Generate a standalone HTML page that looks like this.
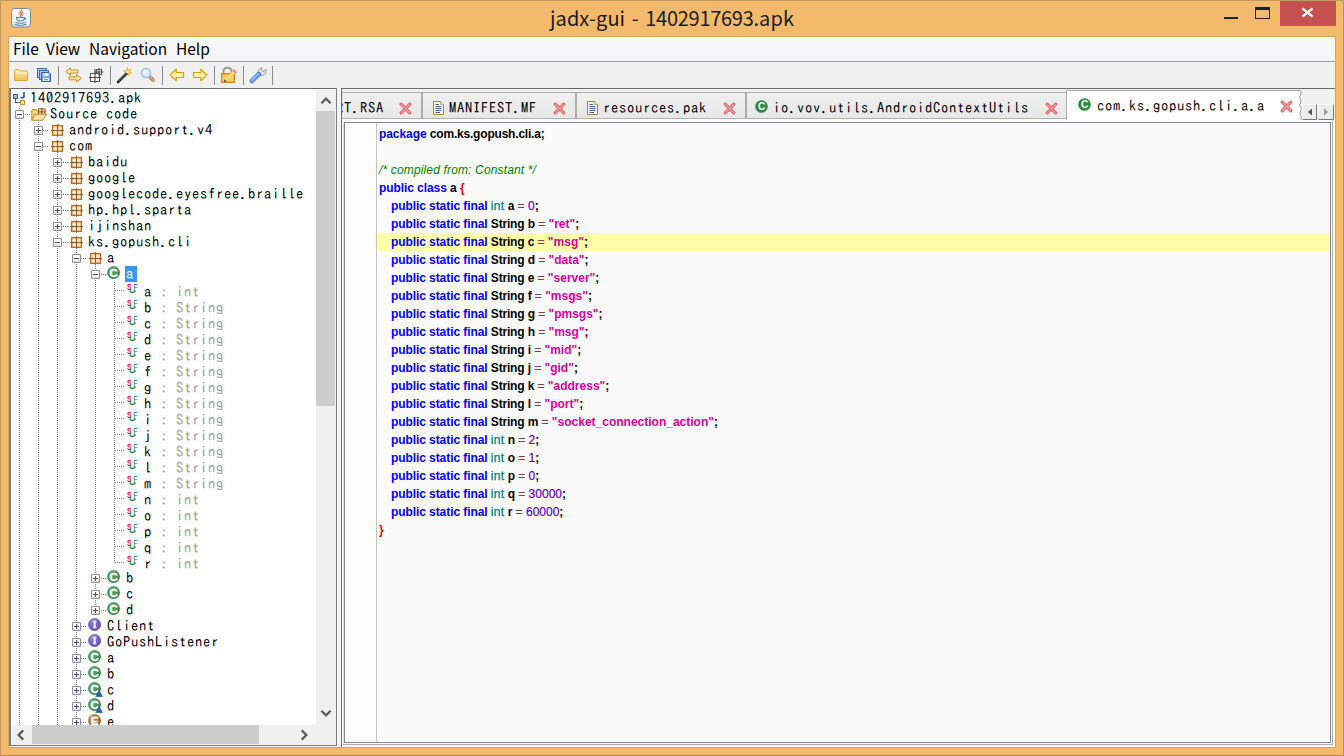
<!DOCTYPE html>
<html lang="en"><head><meta charset="utf-8"><title>jadx-gui - 1402917693.apk</title>
<style>
*{box-sizing:border-box}
html,body{margin:0;padding:0}
body{width:1344px;height:756px;overflow:hidden;background:#f3ba6b;position:relative;font-family:"Noto Sans CJK SC","Liberation Sans",sans-serif}
.ab{position:absolute;display:block}
#frame{position:absolute;left:0;top:0;width:1344px;height:756px;border:1px solid #c39a5e;border-right-color:#b8905a;border-bottom-color:#b08a55}
#title{position:absolute;left:0;top:3px;width:1344px;text-align:center;font-size:20px;line-height:30px;color:#1c1c1c;letter-spacing:0.06px}
#content{position:absolute;left:9px;top:37px;width:1326px;height:710px;background:#f0f0f0}
#div{position:absolute;left:337px;top:88px;width:4px;height:659px;background:#f5f5f5}
#menu{position:absolute;left:9px;top:37px;width:1326px;height:24px;background:#f5f6f7;font-size:15.5px;line-height:23px;color:#000;white-space:pre}
#menu span{position:absolute;top:0}
#lp{position:absolute;left:9px;top:88px;width:328px;height:658px;background:#fff;border:1px solid #7a7f8c;border-top-color:#6a6a6a;border-left:2px solid #7a7f8c}
#tree{position:absolute;left:11px;top:90px;width:305px;height:635px;overflow:hidden;background:#fff}
.tl{position:absolute;height:16px;font:14.5px/16px "IPAGothic","Liberation Mono",monospace;letter-spacing:0.75px;color:#000;white-space:pre}
.tl i{font-style:normal;color:#999}
.fl{overflow:hidden;height:16px}
.fl span{position:relative;top:2px;display:block}
.sel{background:#3399ff;color:#fff;width:12px;padding-left:1px}
.tt{position:absolute;font:14.5px/16px "IPAGothic","Liberation Mono",monospace;letter-spacing:0.75px;color:#000;white-space:pre}
.bx{position:absolute;width:9px;height:9px;border:1px solid #919191;border-radius:1px;background:linear-gradient(#fff 50%,#dcdcdc)}
.bx:before{content:"";position:absolute;left:1px;top:3px;width:5px;height:1px;background:#3a4f8f}
.bx.p:after{content:"";position:absolute;left:3px;top:1px;width:1px;height:5px;background:#3a4f8f}
.hd{position:absolute;height:1px;background:repeating-linear-gradient(90deg,#808080 0 1px,transparent 1px 2px)}
.vd{position:absolute;width:1px;background:repeating-linear-gradient(180deg,#808080 0 1px,transparent 1px 2px)}
.sb{position:absolute;background:#f0f0f0}
.th{position:absolute;background:#cdcdcd}
.tab{position:absolute;background:linear-gradient(#efefef,#e7e7e7);border:1px solid #adadad;border-bottom-color:#b0b0b0}
.tabsel{position:absolute;background:#fff;border:1px solid #adadad;border-bottom:none;border-right:none}
#rp{position:absolute;left:341px;top:88px;width:994px;height:659px;border-left:1px solid #6a6a6a;border-top:1px solid #6a6a6a;background:#f0f0f0}
#tc{position:absolute;left:342px;top:119px;width:993px;height:628px;background:#fff}
#ed{position:absolute;left:344px;top:122px;width:987px;height:621px;border:1px solid #83858f;background:#fafafa;overflow:hidden}
#gut{position:absolute;left:0;top:0;width:32px;height:100%;background:#fdfdfd;border-right:1px solid #c4c4c4}
#code{position:absolute;left:32px;top:2px;right:0;font:12px/18px "Liberation Sans",sans-serif;color:#000}
.ln{height:18px;padding-left:2px;white-space:pre}
.hl{background:#ffffaa}
.ind{display:inline-block;width:12px}
#code b{font-weight:bold}
.k{color:#0000ff;letter-spacing:-0.08px}
.i{color:#000;letter-spacing:-0.2px}
.t{color:#008080;letter-spacing:0.3px;-webkit-text-stroke:0.25px #008080}
.o{color:#804040;-webkit-text-stroke:0.2px #804040}
.n{color:#6400c8;-webkit-text-stroke:0.2px #6400c8}
.s{color:#dc009c}
.r{color:#ff0000}
.c{color:#008000;font-style:italic;letter-spacing:0.15px}
</style></head>
<body>
<div id="frame"></div>
<!-- title bar -->
<svg class="ab" style="left:10px;top:7px" width="22" height="22" viewBox="0 0 22 22">
<linearGradient id="jb" x1="0" y1="0" x2="0" y2="1"><stop offset="0" stop-color="#ffffff"/><stop offset="1" stop-color="#dfe6ee"/></linearGradient>
<rect x="1.5" y="1.5" width="19" height="18.5" rx="3" fill="url(#jb)" stroke="#6f8db0" stroke-width="1"/>
<path d="M11.8 3.2 Q8.5 6 10.6 8 Q11.6 9 10.2 10.4 M12.8 5 Q11 6.6 12.4 8" fill="none" stroke="#e0782a" stroke-width="1.3" stroke-linecap="round"/>
<path d="M6.5 10.5 H14.5 Q14.5 14 10.5 14 Q6.5 14 6.5 10.5 Z" fill="none" stroke="#5a82aa" stroke-width="1.1"/>
<path d="M14.5 11 Q17 11 15 13" fill="none" stroke="#5a82aa" stroke-width="1"/>
<path d="M5.5 15.5 Q10.5 17.5 15.5 15.5 M4.5 17.4 Q10.5 19.6 16.5 17.4" fill="none" stroke="#5a82aa" stroke-width="1"/>
</svg>
<div id="title">jadx-gui<span style="word-spacing:2px"> - </span><span style="letter-spacing:-0.28px">1402917693</span>.apk</div>
<div class="ab" style="left:1224px;top:17px;width:14px;height:2px;background:#1e2228"></div>
<div class="ab" style="left:1255px;top:7px;width:15px;height:12px;border:1px solid #1e2228;border-top-width:3px"></div>
<div class="ab" style="left:1280px;top:1px;width:56px;height:25px;background:#c75050"></div>
<svg class="ab" style="left:1301px;top:7px" width="13" height="11" viewBox="0 0 13 11"><path d="M1.4 1.4 L11.6 9.6 M11.6 1.4 L1.4 9.6" stroke="#fff" stroke-width="2.4"/></svg>

<div class="ab" style="left:8px;top:36px;width:1328px;height:712px;background:#d8a55e"></div>
<div id="content"></div>
<div id="menu"><span style="left:4px">File</span><span style="left:37px">View</span><span style="left:80px">Navigation</span><span style="left:167px">Help</span></div>
<div class="ab" style="left:9px;top:61px;width:1326px;height:1px;background:#9c9c9c"></div>
<svg class="ab" style="left:13px;top:68px" width="16" height="14" viewBox="0 0 16 14"><linearGradient id="fo" x1="0" y1="0" x2="0" y2="1"><stop offset="0" stop-color="#fdf0b8"/><stop offset="1" stop-color="#f2c24f"/></linearGradient><path d="M1.5 12.5 V2.5 Q1.5 1.5 2.5 1.5 H6 L7.2 3 H13.5 Q14.5 3 14.5 4 V12.5 Z" fill="url(#fo)" stroke="#e0a63a" stroke-width="1"/><path d="M2 5 H14" stroke="#fff7d8" stroke-width="1"/></svg>
<svg class="ab" style="left:36px;top:67px" width="16" height="16" viewBox="0 0 16 16"><rect x="1.5" y="1.5" width="9" height="9" fill="#a8c4ea" stroke="#3f6fb5"/><rect x="3.5" y="3.5" width="9" height="9" fill="#a8c4ea" stroke="#3f6fb5"/><path d="M5.5 5.5 H13 L14.5 7 V14.5 H5.5 Z" fill="#7fa6de" stroke="#2f5fae"/><rect x="7.5" y="6" width="5" height="3" fill="#e6eefb"/><rect x="7" y="11" width="6" height="3" fill="#f4f7f4"/><rect x="8" y="12" width="4" height="1.3" fill="#58b848"/></svg>
<svg class="ab" style="left:65px;top:67px" width="17" height="16" viewBox="0 0 17 16"><path d="M0.8 4.5 L5.5 0.8 V3 H13 V6 H5.5 V8.2 Z" fill="#fbe7a0" stroke="#cf8f1c" stroke-width="1" stroke-linejoin="round"/><path d="M16.2 11.3 L11.5 7.6 V9.8 H4 V12.8 H11.5 V15 Z" fill="#fbe7a0" stroke="#cf8f1c" stroke-width="1" stroke-linejoin="round"/></svg>
<svg class="ab" style="left:88px;top:67px" width="17" height="17" viewBox="0 0 17 17"><rect x="8.5" y="2.5" width="5" height="5" fill="#f6f6f6" stroke="#555" stroke-width="1"/><rect x="2.5" y="6.5" width="9" height="8" fill="#fafafa" stroke="#555" stroke-width="1"/><path d="M7 2 V16 M1 10.5 H13 M11 1 V9 M6 5 H15.5" stroke="#4a4a4a" stroke-width="1.1" fill="none"/></svg>
<svg class="ab" style="left:116px;top:66px" width="17" height="18" viewBox="0 0 17 18"><path d="M11.5 1 L12.3 4 L15.5 3 L13.4 5.4 L16 7 L13 7.3 L13 10 L11.4 7.8 L9 9 L10 6.4 L7.5 5 L10.5 4.5 Z" fill="#f7c63c" stroke="#e9a21a" stroke-width="0.5"/><path d="M2 16 L11 7" stroke="#222" stroke-width="2.6" stroke-linecap="round"/><path d="M2.2 15.3 L10.5 7" stroke="#9a9a9a" stroke-width="0.8"/><circle cx="11.6" cy="6.2" r="1.4" fill="#fff8d0"/></svg>
<svg class="ab" style="left:140px;top:67px" width="16" height="16" viewBox="0 0 16 16"><path d="M9.2 9.2 L13 13" stroke="#a86a38" stroke-width="3.4" stroke-linecap="round"/><path d="M9.2 9.2 L13 13" stroke="#dba878" stroke-width="1.8" stroke-linecap="round"/><circle cx="6" cy="6" r="4.6" fill="#dcebfc" stroke="#9bbfee" stroke-width="1.5"/><circle cx="5" cy="5" r="2" fill="#f4f9ff"/></svg>
<svg class="ab" style="left:169px;top:68px" width="16" height="14" viewBox="0 0 16 14"><path d="M1.2 7 L7.2 1.2 V4.5 H14.5 V9.5 H7.2 V12.8 Z" fill="#fdf0b0" stroke="#d9a01a" stroke-width="1.2" stroke-linejoin="round"/></svg>
<svg class="ab" style="left:192px;top:68px" width="16" height="14" viewBox="0 0 16 14"><path d="M14.8 7 L8.8 1.2 V4.5 H1.5 V9.5 H8.8 V12.8 Z" fill="#fdf0b0" stroke="#d9a01a" stroke-width="1.2" stroke-linejoin="round"/></svg>
<svg class="ab" style="left:220px;top:66px" width="18" height="18" viewBox="0 0 18 18"><path d="M3.5 8 V5.5 Q3.5 1.8 7.5 1.8 Q11.5 1.8 11.5 5.5 V8" fill="none" stroke="#9a9a9a" stroke-width="2"/><rect x="1.5" y="7.5" width="13" height="9" fill="#f3b33d" stroke="#d98a14" stroke-width="1"/><rect x="3" y="9" width="10" height="6" fill="#f8cf6e"/><path d="M5.5 14.5 L14.5 5.5" stroke="#f2c44a" stroke-width="3.2" stroke-linecap="round"/><path d="M5.5 14.5 L14.5 5.5" stroke="#fbe9a8" stroke-width="1.2"/><path d="M13.6 4.4 L15.6 6.4" stroke="#e59a8a" stroke-width="2.4" stroke-linecap="round"/><path d="M4 16 L4.6 13.4 L6.6 15.4 Z" fill="#3a2a18"/></svg>
<svg class="ab" style="left:248px;top:66px" width="19" height="18" viewBox="0 0 19 18"><path d="M10.2 8.2 Q9 3.6 13.6 1.6 L13.9 4.9 L16 5.4 L17.8 3.2 Q18.8 8 14.6 9.4 Q12.8 10 11.6 9.4 Z" fill="#e4e4e4" stroke="#8f8f8f" stroke-width="0.9"/><path d="M4 14.8 L10.8 8.2" stroke="#3f72c8" stroke-width="4.6" stroke-linecap="round"/><path d="M4 14.8 L10.8 8.2" stroke="#6fa0ea" stroke-width="3" stroke-linecap="round"/><path d="M3.8 14 L9.8 8.2" stroke="#a8c8f6" stroke-width="1.1" stroke-linecap="round"/></svg>
<div class="ab" style="left:58px;top:66px;width:1px;height:19px;background:#8c8c8c"></div>
<div class="ab" style="left:110px;top:66px;width:1px;height:19px;background:#8c8c8c"></div>
<div class="ab" style="left:162px;top:66px;width:1px;height:19px;background:#8c8c8c"></div>
<div class="ab" style="left:214px;top:66px;width:1px;height:19px;background:#8c8c8c"></div>
<div class="ab" style="left:243px;top:66px;width:1px;height:19px;background:#8c8c8c"></div>
<div class="ab" style="left:272px;top:66px;width:1px;height:19px;background:#8c8c8c"></div>

<div id="div"></div>
<!-- left pane -->
<div id="lp"></div>
<div id="tree">
<svg class="ab" style="left:2px;top:1px" width="13" height="15" viewBox="0 0 13 15"><path d="M2.5 7 V11.5 H8" fill="none" stroke="#2d62a0" stroke-width="1.1"/><rect x="0.5" y="3.5" width="4" height="4" fill="#a9bbdc" stroke="#2d62a0" stroke-width="1"/><rect x="7.5" y="9.5" width="4" height="4" fill="#ffe28a" stroke="#c9952a" stroke-width="1"/><path d="M11 1 V5.2 Q11 6.8 9.3 6.8 Q8.4 6.8 7.8 6.2" fill="none" stroke="#2a5fa8" stroke-width="1.7"/></svg>
<div class="tl" style="left:19px;top:0px">1402917693.apk</div>
<div class="bx" style="left:4px;top:20px"></div>
<div class="hd" style="left:14px;top:24px;width:5px"></div>
<svg class="ab" style="left:20px;top:18px" width="17" height="14" viewBox="0 0 17 14"><path d="M0.8 12.3 V2.6 Q0.8 1.6 1.8 1.6 H5.2 L6.4 3 H11.5 V5" fill="#f5d488" stroke="#c08426" stroke-width="1"/><rect x="7.5" y="0.8" width="6.6" height="6.2" fill="#f6dcae" stroke="#a4551a" stroke-width="0.9"/><path d="M10.8 0 V7.4 M7 3.9 H15" stroke="#8a4717" stroke-width="1"/><path d="M0.8 12.3 L4.2 6.2 H15.8 L11.6 12.3 Z" fill="#fbe3a4" stroke="#c08426" stroke-width="1" stroke-linejoin="round"/></svg>
<div class="tl" style="left:39px;top:16px">Source code</div>
<div class="bx p" style="left:23px;top:36px"></div>
<div class="hd" style="left:32px;top:40px;width:6px"></div>
<svg class="ab" style="left:40px;top:34px" width="14" height="14" viewBox="0 0 14 14"><rect x="1.6" y="1.6" width="9.8" height="9.8" fill="#eec08a" stroke="#c2701f" stroke-width="1.3"/><circle cx="4.3" cy="4.3" r="1.7" fill="#fdf0d4"/><circle cx="8.8" cy="4.3" r="1.7" fill="#fbe8c6"/><circle cx="4.3" cy="8.8" r="1.7" fill="#fbe8c6"/><circle cx="8.8" cy="8.8" r="1.7" fill="#f9e2ba"/><path d="M6.5 0 V13 M0 6.5 H13" stroke="#94603c" stroke-width="1"/></svg>
<div class="tl" style="left:58px;top:32px">android.support.v4</div>
<div class="bx" style="left:23px;top:52px"></div>
<div class="hd" style="left:32px;top:56px;width:6px"></div>
<svg class="ab" style="left:40px;top:50px" width="14" height="14" viewBox="0 0 14 14"><rect x="1.6" y="1.6" width="9.8" height="9.8" fill="#eec08a" stroke="#c2701f" stroke-width="1.3"/><circle cx="4.3" cy="4.3" r="1.7" fill="#fdf0d4"/><circle cx="8.8" cy="4.3" r="1.7" fill="#fbe8c6"/><circle cx="4.3" cy="8.8" r="1.7" fill="#fbe8c6"/><circle cx="8.8" cy="8.8" r="1.7" fill="#f9e2ba"/><path d="M6.5 0 V13 M0 6.5 H13" stroke="#94603c" stroke-width="1"/></svg>
<div class="tl" style="left:58px;top:48px">com</div>
<div class="bx p" style="left:42px;top:68px"></div>
<div class="hd" style="left:52px;top:72px;width:5px"></div>
<svg class="ab" style="left:59px;top:66px" width="14" height="14" viewBox="0 0 14 14"><rect x="1.6" y="1.6" width="9.8" height="9.8" fill="#eec08a" stroke="#c2701f" stroke-width="1.3"/><circle cx="4.3" cy="4.3" r="1.7" fill="#fdf0d4"/><circle cx="8.8" cy="4.3" r="1.7" fill="#fbe8c6"/><circle cx="4.3" cy="8.8" r="1.7" fill="#fbe8c6"/><circle cx="8.8" cy="8.8" r="1.7" fill="#f9e2ba"/><path d="M6.5 0 V13 M0 6.5 H13" stroke="#94603c" stroke-width="1"/></svg>
<div class="tl" style="left:77px;top:64px">baidu</div>
<div class="bx p" style="left:42px;top:84px"></div>
<div class="hd" style="left:52px;top:88px;width:5px"></div>
<svg class="ab" style="left:59px;top:82px" width="14" height="14" viewBox="0 0 14 14"><rect x="1.6" y="1.6" width="9.8" height="9.8" fill="#eec08a" stroke="#c2701f" stroke-width="1.3"/><circle cx="4.3" cy="4.3" r="1.7" fill="#fdf0d4"/><circle cx="8.8" cy="4.3" r="1.7" fill="#fbe8c6"/><circle cx="4.3" cy="8.8" r="1.7" fill="#fbe8c6"/><circle cx="8.8" cy="8.8" r="1.7" fill="#f9e2ba"/><path d="M6.5 0 V13 M0 6.5 H13" stroke="#94603c" stroke-width="1"/></svg>
<div class="tl" style="left:77px;top:80px">google</div>
<div class="bx p" style="left:42px;top:100px"></div>
<div class="hd" style="left:52px;top:104px;width:5px"></div>
<svg class="ab" style="left:59px;top:98px" width="14" height="14" viewBox="0 0 14 14"><rect x="1.6" y="1.6" width="9.8" height="9.8" fill="#eec08a" stroke="#c2701f" stroke-width="1.3"/><circle cx="4.3" cy="4.3" r="1.7" fill="#fdf0d4"/><circle cx="8.8" cy="4.3" r="1.7" fill="#fbe8c6"/><circle cx="4.3" cy="8.8" r="1.7" fill="#fbe8c6"/><circle cx="8.8" cy="8.8" r="1.7" fill="#f9e2ba"/><path d="M6.5 0 V13 M0 6.5 H13" stroke="#94603c" stroke-width="1"/></svg>
<div class="tl" style="left:77px;top:96px">googlecode.eyesfree.braille</div>
<div class="bx p" style="left:42px;top:116px"></div>
<div class="hd" style="left:52px;top:120px;width:5px"></div>
<svg class="ab" style="left:59px;top:114px" width="14" height="14" viewBox="0 0 14 14"><rect x="1.6" y="1.6" width="9.8" height="9.8" fill="#eec08a" stroke="#c2701f" stroke-width="1.3"/><circle cx="4.3" cy="4.3" r="1.7" fill="#fdf0d4"/><circle cx="8.8" cy="4.3" r="1.7" fill="#fbe8c6"/><circle cx="4.3" cy="8.8" r="1.7" fill="#fbe8c6"/><circle cx="8.8" cy="8.8" r="1.7" fill="#f9e2ba"/><path d="M6.5 0 V13 M0 6.5 H13" stroke="#94603c" stroke-width="1"/></svg>
<div class="tl" style="left:77px;top:112px">hp.hpl.sparta</div>
<div class="bx p" style="left:42px;top:132px"></div>
<div class="hd" style="left:52px;top:136px;width:5px"></div>
<svg class="ab" style="left:59px;top:130px" width="14" height="14" viewBox="0 0 14 14"><rect x="1.6" y="1.6" width="9.8" height="9.8" fill="#eec08a" stroke="#c2701f" stroke-width="1.3"/><circle cx="4.3" cy="4.3" r="1.7" fill="#fdf0d4"/><circle cx="8.8" cy="4.3" r="1.7" fill="#fbe8c6"/><circle cx="4.3" cy="8.8" r="1.7" fill="#fbe8c6"/><circle cx="8.8" cy="8.8" r="1.7" fill="#f9e2ba"/><path d="M6.5 0 V13 M0 6.5 H13" stroke="#94603c" stroke-width="1"/></svg>
<div class="tl" style="left:77px;top:128px">ijinshan</div>
<div class="bx" style="left:42px;top:148px"></div>
<div class="hd" style="left:52px;top:152px;width:5px"></div>
<svg class="ab" style="left:59px;top:146px" width="14" height="14" viewBox="0 0 14 14"><rect x="1.6" y="1.6" width="9.8" height="9.8" fill="#eec08a" stroke="#c2701f" stroke-width="1.3"/><circle cx="4.3" cy="4.3" r="1.7" fill="#fdf0d4"/><circle cx="8.8" cy="4.3" r="1.7" fill="#fbe8c6"/><circle cx="4.3" cy="8.8" r="1.7" fill="#fbe8c6"/><circle cx="8.8" cy="8.8" r="1.7" fill="#f9e2ba"/><path d="M6.5 0 V13 M0 6.5 H13" stroke="#94603c" stroke-width="1"/></svg>
<div class="tl" style="left:77px;top:144px">ks.gopush.cli</div>
<div class="bx" style="left:61px;top:164px"></div>
<div class="hd" style="left:70px;top:168px;width:6px"></div>
<svg class="ab" style="left:78px;top:162px" width="14" height="14" viewBox="0 0 14 14"><rect x="1.6" y="1.6" width="9.8" height="9.8" fill="#eec08a" stroke="#c2701f" stroke-width="1.3"/><circle cx="4.3" cy="4.3" r="1.7" fill="#fdf0d4"/><circle cx="8.8" cy="4.3" r="1.7" fill="#fbe8c6"/><circle cx="4.3" cy="8.8" r="1.7" fill="#fbe8c6"/><circle cx="8.8" cy="8.8" r="1.7" fill="#f9e2ba"/><path d="M6.5 0 V13 M0 6.5 H13" stroke="#94603c" stroke-width="1"/></svg>
<div class="tl" style="left:96px;top:160px">a</div>
<div class="bx" style="left:80px;top:180px"></div>
<div class="hd" style="left:90px;top:184px;width:5px"></div>
<svg class="ab" style="left:96px;top:176px" width="16" height="16" viewBox="0 0 16 16"><radialGradient id="gC96_176" cx="0.35" cy="0.3" r="0.8"><stop offset="0" stop-color="#6bb07a"/><stop offset="1" stop-color="#2f7f42"/></radialGradient><circle cx="6.5" cy="6.5" r="6.5" fill="url(#gC96_176)"/><text x="6.6" y="10.6" text-anchor="middle" font-family='"Liberation Sans",sans-serif' font-weight="bold" font-size="11.5" fill="#fff" stroke="#fff" stroke-width="0.3">C</text></svg>
<div class="tl sel" style="left:114px;top:176px">a</div>
<div class="hd" style="left:104px;top:200px;width:10px"></div>
<svg class="ab" style="left:116px;top:192px" width="13" height="13" viewBox="0 0 13 13"><path d="M2.6 8.3 Q5.5 12.9 8.4 8.3" fill="none" stroke="#2f8a3e" stroke-width="1.5"/><g transform="translate(0,7.7) scale(1,0.9)"><text x="0" y="0" textLength="4.6" lengthAdjust="spacingAndGlyphs" font-family='"Liberation Sans",sans-serif' font-weight="bold" font-size="10" fill="#c4102f">S</text><text x="6.2" y="0" textLength="4.4" lengthAdjust="spacingAndGlyphs" font-family='"Liberation Sans",sans-serif' font-size="10" fill="#3f5a8c">F</text></g></svg>
<div class="tl fl" style="left:133px;top:192px"><span>a<i> : int</i></span></div>
<div class="hd" style="left:104px;top:216px;width:10px"></div>
<svg class="ab" style="left:116px;top:208px" width="13" height="13" viewBox="0 0 13 13"><path d="M2.6 8.3 Q5.5 12.9 8.4 8.3" fill="none" stroke="#2f8a3e" stroke-width="1.5"/><g transform="translate(0,7.7) scale(1,0.9)"><text x="0" y="0" textLength="4.6" lengthAdjust="spacingAndGlyphs" font-family='"Liberation Sans",sans-serif' font-weight="bold" font-size="10" fill="#c4102f">S</text><text x="6.2" y="0" textLength="4.4" lengthAdjust="spacingAndGlyphs" font-family='"Liberation Sans",sans-serif' font-size="10" fill="#3f5a8c">F</text></g></svg>
<div class="tl fl" style="left:133px;top:208px"><span>b<i> : String</i></span></div>
<div class="hd" style="left:104px;top:232px;width:10px"></div>
<svg class="ab" style="left:116px;top:224px" width="13" height="13" viewBox="0 0 13 13"><path d="M2.6 8.3 Q5.5 12.9 8.4 8.3" fill="none" stroke="#2f8a3e" stroke-width="1.5"/><g transform="translate(0,7.7) scale(1,0.9)"><text x="0" y="0" textLength="4.6" lengthAdjust="spacingAndGlyphs" font-family='"Liberation Sans",sans-serif' font-weight="bold" font-size="10" fill="#c4102f">S</text><text x="6.2" y="0" textLength="4.4" lengthAdjust="spacingAndGlyphs" font-family='"Liberation Sans",sans-serif' font-size="10" fill="#3f5a8c">F</text></g></svg>
<div class="tl fl" style="left:133px;top:224px"><span>c<i> : String</i></span></div>
<div class="hd" style="left:104px;top:248px;width:10px"></div>
<svg class="ab" style="left:116px;top:240px" width="13" height="13" viewBox="0 0 13 13"><path d="M2.6 8.3 Q5.5 12.9 8.4 8.3" fill="none" stroke="#2f8a3e" stroke-width="1.5"/><g transform="translate(0,7.7) scale(1,0.9)"><text x="0" y="0" textLength="4.6" lengthAdjust="spacingAndGlyphs" font-family='"Liberation Sans",sans-serif' font-weight="bold" font-size="10" fill="#c4102f">S</text><text x="6.2" y="0" textLength="4.4" lengthAdjust="spacingAndGlyphs" font-family='"Liberation Sans",sans-serif' font-size="10" fill="#3f5a8c">F</text></g></svg>
<div class="tl fl" style="left:133px;top:240px"><span>d<i> : String</i></span></div>
<div class="hd" style="left:104px;top:264px;width:10px"></div>
<svg class="ab" style="left:116px;top:256px" width="13" height="13" viewBox="0 0 13 13"><path d="M2.6 8.3 Q5.5 12.9 8.4 8.3" fill="none" stroke="#2f8a3e" stroke-width="1.5"/><g transform="translate(0,7.7) scale(1,0.9)"><text x="0" y="0" textLength="4.6" lengthAdjust="spacingAndGlyphs" font-family='"Liberation Sans",sans-serif' font-weight="bold" font-size="10" fill="#c4102f">S</text><text x="6.2" y="0" textLength="4.4" lengthAdjust="spacingAndGlyphs" font-family='"Liberation Sans",sans-serif' font-size="10" fill="#3f5a8c">F</text></g></svg>
<div class="tl fl" style="left:133px;top:256px"><span>e<i> : String</i></span></div>
<div class="hd" style="left:104px;top:280px;width:10px"></div>
<svg class="ab" style="left:116px;top:272px" width="13" height="13" viewBox="0 0 13 13"><path d="M2.6 8.3 Q5.5 12.9 8.4 8.3" fill="none" stroke="#2f8a3e" stroke-width="1.5"/><g transform="translate(0,7.7) scale(1,0.9)"><text x="0" y="0" textLength="4.6" lengthAdjust="spacingAndGlyphs" font-family='"Liberation Sans",sans-serif' font-weight="bold" font-size="10" fill="#c4102f">S</text><text x="6.2" y="0" textLength="4.4" lengthAdjust="spacingAndGlyphs" font-family='"Liberation Sans",sans-serif' font-size="10" fill="#3f5a8c">F</text></g></svg>
<div class="tl fl" style="left:133px;top:272px"><span>f<i> : String</i></span></div>
<div class="hd" style="left:104px;top:296px;width:10px"></div>
<svg class="ab" style="left:116px;top:288px" width="13" height="13" viewBox="0 0 13 13"><path d="M2.6 8.3 Q5.5 12.9 8.4 8.3" fill="none" stroke="#2f8a3e" stroke-width="1.5"/><g transform="translate(0,7.7) scale(1,0.9)"><text x="0" y="0" textLength="4.6" lengthAdjust="spacingAndGlyphs" font-family='"Liberation Sans",sans-serif' font-weight="bold" font-size="10" fill="#c4102f">S</text><text x="6.2" y="0" textLength="4.4" lengthAdjust="spacingAndGlyphs" font-family='"Liberation Sans",sans-serif' font-size="10" fill="#3f5a8c">F</text></g></svg>
<div class="tl fl" style="left:133px;top:288px"><span>g<i> : String</i></span></div>
<div class="hd" style="left:104px;top:312px;width:10px"></div>
<svg class="ab" style="left:116px;top:304px" width="13" height="13" viewBox="0 0 13 13"><path d="M2.6 8.3 Q5.5 12.9 8.4 8.3" fill="none" stroke="#2f8a3e" stroke-width="1.5"/><g transform="translate(0,7.7) scale(1,0.9)"><text x="0" y="0" textLength="4.6" lengthAdjust="spacingAndGlyphs" font-family='"Liberation Sans",sans-serif' font-weight="bold" font-size="10" fill="#c4102f">S</text><text x="6.2" y="0" textLength="4.4" lengthAdjust="spacingAndGlyphs" font-family='"Liberation Sans",sans-serif' font-size="10" fill="#3f5a8c">F</text></g></svg>
<div class="tl fl" style="left:133px;top:304px"><span>h<i> : String</i></span></div>
<div class="hd" style="left:104px;top:328px;width:10px"></div>
<svg class="ab" style="left:116px;top:320px" width="13" height="13" viewBox="0 0 13 13"><path d="M2.6 8.3 Q5.5 12.9 8.4 8.3" fill="none" stroke="#2f8a3e" stroke-width="1.5"/><g transform="translate(0,7.7) scale(1,0.9)"><text x="0" y="0" textLength="4.6" lengthAdjust="spacingAndGlyphs" font-family='"Liberation Sans",sans-serif' font-weight="bold" font-size="10" fill="#c4102f">S</text><text x="6.2" y="0" textLength="4.4" lengthAdjust="spacingAndGlyphs" font-family='"Liberation Sans",sans-serif' font-size="10" fill="#3f5a8c">F</text></g></svg>
<div class="tl fl" style="left:133px;top:320px"><span>i<i> : String</i></span></div>
<div class="hd" style="left:104px;top:344px;width:10px"></div>
<svg class="ab" style="left:116px;top:336px" width="13" height="13" viewBox="0 0 13 13"><path d="M2.6 8.3 Q5.5 12.9 8.4 8.3" fill="none" stroke="#2f8a3e" stroke-width="1.5"/><g transform="translate(0,7.7) scale(1,0.9)"><text x="0" y="0" textLength="4.6" lengthAdjust="spacingAndGlyphs" font-family='"Liberation Sans",sans-serif' font-weight="bold" font-size="10" fill="#c4102f">S</text><text x="6.2" y="0" textLength="4.4" lengthAdjust="spacingAndGlyphs" font-family='"Liberation Sans",sans-serif' font-size="10" fill="#3f5a8c">F</text></g></svg>
<div class="tl fl" style="left:133px;top:336px"><span>j<i> : String</i></span></div>
<div class="hd" style="left:104px;top:360px;width:10px"></div>
<svg class="ab" style="left:116px;top:352px" width="13" height="13" viewBox="0 0 13 13"><path d="M2.6 8.3 Q5.5 12.9 8.4 8.3" fill="none" stroke="#2f8a3e" stroke-width="1.5"/><g transform="translate(0,7.7) scale(1,0.9)"><text x="0" y="0" textLength="4.6" lengthAdjust="spacingAndGlyphs" font-family='"Liberation Sans",sans-serif' font-weight="bold" font-size="10" fill="#c4102f">S</text><text x="6.2" y="0" textLength="4.4" lengthAdjust="spacingAndGlyphs" font-family='"Liberation Sans",sans-serif' font-size="10" fill="#3f5a8c">F</text></g></svg>
<div class="tl fl" style="left:133px;top:352px"><span>k<i> : String</i></span></div>
<div class="hd" style="left:104px;top:376px;width:10px"></div>
<svg class="ab" style="left:116px;top:368px" width="13" height="13" viewBox="0 0 13 13"><path d="M2.6 8.3 Q5.5 12.9 8.4 8.3" fill="none" stroke="#2f8a3e" stroke-width="1.5"/><g transform="translate(0,7.7) scale(1,0.9)"><text x="0" y="0" textLength="4.6" lengthAdjust="spacingAndGlyphs" font-family='"Liberation Sans",sans-serif' font-weight="bold" font-size="10" fill="#c4102f">S</text><text x="6.2" y="0" textLength="4.4" lengthAdjust="spacingAndGlyphs" font-family='"Liberation Sans",sans-serif' font-size="10" fill="#3f5a8c">F</text></g></svg>
<div class="tl fl" style="left:133px;top:368px"><span>l<i> : String</i></span></div>
<div class="hd" style="left:104px;top:392px;width:10px"></div>
<svg class="ab" style="left:116px;top:384px" width="13" height="13" viewBox="0 0 13 13"><path d="M2.6 8.3 Q5.5 12.9 8.4 8.3" fill="none" stroke="#2f8a3e" stroke-width="1.5"/><g transform="translate(0,7.7) scale(1,0.9)"><text x="0" y="0" textLength="4.6" lengthAdjust="spacingAndGlyphs" font-family='"Liberation Sans",sans-serif' font-weight="bold" font-size="10" fill="#c4102f">S</text><text x="6.2" y="0" textLength="4.4" lengthAdjust="spacingAndGlyphs" font-family='"Liberation Sans",sans-serif' font-size="10" fill="#3f5a8c">F</text></g></svg>
<div class="tl fl" style="left:133px;top:384px"><span>m<i> : String</i></span></div>
<div class="hd" style="left:104px;top:408px;width:10px"></div>
<svg class="ab" style="left:116px;top:400px" width="13" height="13" viewBox="0 0 13 13"><path d="M2.6 8.3 Q5.5 12.9 8.4 8.3" fill="none" stroke="#2f8a3e" stroke-width="1.5"/><g transform="translate(0,7.7) scale(1,0.9)"><text x="0" y="0" textLength="4.6" lengthAdjust="spacingAndGlyphs" font-family='"Liberation Sans",sans-serif' font-weight="bold" font-size="10" fill="#c4102f">S</text><text x="6.2" y="0" textLength="4.4" lengthAdjust="spacingAndGlyphs" font-family='"Liberation Sans",sans-serif' font-size="10" fill="#3f5a8c">F</text></g></svg>
<div class="tl fl" style="left:133px;top:400px"><span>n<i> : int</i></span></div>
<div class="hd" style="left:104px;top:424px;width:10px"></div>
<svg class="ab" style="left:116px;top:416px" width="13" height="13" viewBox="0 0 13 13"><path d="M2.6 8.3 Q5.5 12.9 8.4 8.3" fill="none" stroke="#2f8a3e" stroke-width="1.5"/><g transform="translate(0,7.7) scale(1,0.9)"><text x="0" y="0" textLength="4.6" lengthAdjust="spacingAndGlyphs" font-family='"Liberation Sans",sans-serif' font-weight="bold" font-size="10" fill="#c4102f">S</text><text x="6.2" y="0" textLength="4.4" lengthAdjust="spacingAndGlyphs" font-family='"Liberation Sans",sans-serif' font-size="10" fill="#3f5a8c">F</text></g></svg>
<div class="tl fl" style="left:133px;top:416px"><span>o<i> : int</i></span></div>
<div class="hd" style="left:104px;top:440px;width:10px"></div>
<svg class="ab" style="left:116px;top:432px" width="13" height="13" viewBox="0 0 13 13"><path d="M2.6 8.3 Q5.5 12.9 8.4 8.3" fill="none" stroke="#2f8a3e" stroke-width="1.5"/><g transform="translate(0,7.7) scale(1,0.9)"><text x="0" y="0" textLength="4.6" lengthAdjust="spacingAndGlyphs" font-family='"Liberation Sans",sans-serif' font-weight="bold" font-size="10" fill="#c4102f">S</text><text x="6.2" y="0" textLength="4.4" lengthAdjust="spacingAndGlyphs" font-family='"Liberation Sans",sans-serif' font-size="10" fill="#3f5a8c">F</text></g></svg>
<div class="tl fl" style="left:133px;top:432px"><span>p<i> : int</i></span></div>
<div class="hd" style="left:104px;top:456px;width:10px"></div>
<svg class="ab" style="left:116px;top:448px" width="13" height="13" viewBox="0 0 13 13"><path d="M2.6 8.3 Q5.5 12.9 8.4 8.3" fill="none" stroke="#2f8a3e" stroke-width="1.5"/><g transform="translate(0,7.7) scale(1,0.9)"><text x="0" y="0" textLength="4.6" lengthAdjust="spacingAndGlyphs" font-family='"Liberation Sans",sans-serif' font-weight="bold" font-size="10" fill="#c4102f">S</text><text x="6.2" y="0" textLength="4.4" lengthAdjust="spacingAndGlyphs" font-family='"Liberation Sans",sans-serif' font-size="10" fill="#3f5a8c">F</text></g></svg>
<div class="tl fl" style="left:133px;top:448px"><span>q<i> : int</i></span></div>
<div class="hd" style="left:104px;top:472px;width:10px"></div>
<svg class="ab" style="left:116px;top:464px" width="13" height="13" viewBox="0 0 13 13"><path d="M2.6 8.3 Q5.5 12.9 8.4 8.3" fill="none" stroke="#2f8a3e" stroke-width="1.5"/><g transform="translate(0,7.7) scale(1,0.9)"><text x="0" y="0" textLength="4.6" lengthAdjust="spacingAndGlyphs" font-family='"Liberation Sans",sans-serif' font-weight="bold" font-size="10" fill="#c4102f">S</text><text x="6.2" y="0" textLength="4.4" lengthAdjust="spacingAndGlyphs" font-family='"Liberation Sans",sans-serif' font-size="10" fill="#3f5a8c">F</text></g></svg>
<div class="tl fl" style="left:133px;top:464px"><span>r<i> : int</i></span></div>
<div class="bx p" style="left:80px;top:484px"></div>
<div class="hd" style="left:90px;top:488px;width:5px"></div>
<svg class="ab" style="left:96px;top:480px" width="16" height="16" viewBox="0 0 16 16"><radialGradient id="gC96_480" cx="0.35" cy="0.3" r="0.8"><stop offset="0" stop-color="#6bb07a"/><stop offset="1" stop-color="#2f7f42"/></radialGradient><circle cx="6.5" cy="6.5" r="6.5" fill="url(#gC96_480)"/><text x="6.6" y="10.6" text-anchor="middle" font-family='"Liberation Sans",sans-serif' font-weight="bold" font-size="11.5" fill="#fff" stroke="#fff" stroke-width="0.3">C</text></svg>
<div class="tl" style="left:115px;top:480px">b</div>
<div class="bx p" style="left:80px;top:500px"></div>
<div class="hd" style="left:90px;top:504px;width:5px"></div>
<svg class="ab" style="left:96px;top:496px" width="16" height="16" viewBox="0 0 16 16"><radialGradient id="gC96_496" cx="0.35" cy="0.3" r="0.8"><stop offset="0" stop-color="#6bb07a"/><stop offset="1" stop-color="#2f7f42"/></radialGradient><circle cx="6.5" cy="6.5" r="6.5" fill="url(#gC96_496)"/><text x="6.6" y="10.6" text-anchor="middle" font-family='"Liberation Sans",sans-serif' font-weight="bold" font-size="11.5" fill="#fff" stroke="#fff" stroke-width="0.3">C</text></svg>
<div class="tl" style="left:115px;top:496px">c</div>
<div class="bx p" style="left:80px;top:516px"></div>
<div class="hd" style="left:90px;top:520px;width:5px"></div>
<svg class="ab" style="left:96px;top:512px" width="16" height="16" viewBox="0 0 16 16"><radialGradient id="gC96_512" cx="0.35" cy="0.3" r="0.8"><stop offset="0" stop-color="#6bb07a"/><stop offset="1" stop-color="#2f7f42"/></radialGradient><circle cx="6.5" cy="6.5" r="6.5" fill="url(#gC96_512)"/><text x="6.6" y="10.6" text-anchor="middle" font-family='"Liberation Sans",sans-serif' font-weight="bold" font-size="11.5" fill="#fff" stroke="#fff" stroke-width="0.3">C</text></svg>
<div class="tl" style="left:115px;top:512px">d</div>
<div class="bx p" style="left:61px;top:532px"></div>
<div class="hd" style="left:70px;top:536px;width:6px"></div>
<svg class="ab" style="left:77px;top:528px" width="16" height="16" viewBox="0 0 16 16"><radialGradient id="gI77_528" cx="0.35" cy="0.3" r="0.8"><stop offset="0" stop-color="#9a86d6"/><stop offset="1" stop-color="#5b45a3"/></radialGradient><circle cx="6.5" cy="6.5" r="6.5" fill="url(#gI77_528)"/><text x="6.6" y="9.8" text-anchor="middle" font-family='"Liberation Serif",serif' font-weight="bold" font-size="9.6" fill="#fff" stroke="#fff" stroke-width="0.3">I</text></svg>
<div class="tl" style="left:96px;top:528px">Client</div>
<div class="bx p" style="left:61px;top:548px"></div>
<div class="hd" style="left:70px;top:552px;width:6px"></div>
<svg class="ab" style="left:77px;top:544px" width="16" height="16" viewBox="0 0 16 16"><radialGradient id="gI77_544" cx="0.35" cy="0.3" r="0.8"><stop offset="0" stop-color="#9a86d6"/><stop offset="1" stop-color="#5b45a3"/></radialGradient><circle cx="6.5" cy="6.5" r="6.5" fill="url(#gI77_544)"/><text x="6.6" y="9.8" text-anchor="middle" font-family='"Liberation Serif",serif' font-weight="bold" font-size="9.6" fill="#fff" stroke="#fff" stroke-width="0.3">I</text></svg>
<div class="tl" style="left:96px;top:544px">GoPushListener</div>
<div class="bx p" style="left:61px;top:564px"></div>
<div class="hd" style="left:70px;top:568px;width:6px"></div>
<svg class="ab" style="left:77px;top:560px" width="16" height="16" viewBox="0 0 16 16"><radialGradient id="gC77_560" cx="0.35" cy="0.3" r="0.8"><stop offset="0" stop-color="#6bb07a"/><stop offset="1" stop-color="#2f7f42"/></radialGradient><circle cx="6.5" cy="6.5" r="6.5" fill="url(#gC77_560)"/><text x="6.6" y="10.6" text-anchor="middle" font-family='"Liberation Sans",sans-serif' font-weight="bold" font-size="11.5" fill="#fff" stroke="#fff" stroke-width="0.3">C</text></svg>
<div class="tl" style="left:96px;top:560px">a</div>
<div class="bx p" style="left:61px;top:580px"></div>
<div class="hd" style="left:70px;top:584px;width:6px"></div>
<svg class="ab" style="left:77px;top:576px" width="16" height="16" viewBox="0 0 16 16"><radialGradient id="gC77_576" cx="0.35" cy="0.3" r="0.8"><stop offset="0" stop-color="#6bb07a"/><stop offset="1" stop-color="#2f7f42"/></radialGradient><circle cx="6.5" cy="6.5" r="6.5" fill="url(#gC77_576)"/><text x="6.6" y="10.6" text-anchor="middle" font-family='"Liberation Sans",sans-serif' font-weight="bold" font-size="11.5" fill="#fff" stroke="#fff" stroke-width="0.3">C</text></svg>
<div class="tl" style="left:96px;top:576px">b</div>
<div class="bx p" style="left:61px;top:596px"></div>
<div class="hd" style="left:70px;top:600px;width:6px"></div>
<svg class="ab" style="left:77px;top:592px" width="16" height="16" viewBox="0 0 16 16"><radialGradient id="gC77_592" cx="0.35" cy="0.3" r="0.8"><stop offset="0" stop-color="#6bb07a"/><stop offset="1" stop-color="#2f7f42"/></radialGradient><circle cx="6.5" cy="6.5" r="6.5" fill="url(#gC77_592)"/><text x="6.6" y="10.6" text-anchor="middle" font-family='"Liberation Sans",sans-serif' font-weight="bold" font-size="11.5" fill="#fff" stroke="#fff" stroke-width="0.3">C</text><path d="M7.8 14.4 L14.4 14.4 L11.1 8.4 Z" fill="#2b62a8" stroke="#2b62a8" stroke-width="0.8" stroke-linejoin="round"/></svg>
<div class="tl" style="left:96px;top:592px">c</div>
<div class="bx p" style="left:61px;top:612px"></div>
<div class="hd" style="left:70px;top:616px;width:6px"></div>
<svg class="ab" style="left:77px;top:608px" width="16" height="16" viewBox="0 0 16 16"><radialGradient id="gC77_608" cx="0.35" cy="0.3" r="0.8"><stop offset="0" stop-color="#6bb07a"/><stop offset="1" stop-color="#2f7f42"/></radialGradient><circle cx="6.5" cy="6.5" r="6.5" fill="url(#gC77_608)"/><text x="6.6" y="10.6" text-anchor="middle" font-family='"Liberation Sans",sans-serif' font-weight="bold" font-size="11.5" fill="#fff" stroke="#fff" stroke-width="0.3">C</text><path d="M7.8 14.4 L14.4 14.4 L11.1 8.4 Z" fill="#2b62a8" stroke="#2b62a8" stroke-width="0.8" stroke-linejoin="round"/></svg>
<div class="tl" style="left:96px;top:608px">d</div>
<div class="bx p" style="left:61px;top:628px"></div>
<div class="hd" style="left:70px;top:632px;width:6px"></div>
<svg class="ab" style="left:77px;top:624px" width="16" height="16" viewBox="0 0 16 16"><radialGradient id="gE77_624" cx="0.35" cy="0.3" r="0.8"><stop offset="0" stop-color="#c99a5a"/><stop offset="1" stop-color="#8e5a22"/></radialGradient><circle cx="6.5" cy="6.5" r="6.5" fill="url(#gE77_624)"/><text x="6.6" y="10.6" text-anchor="middle" font-family='"Liberation Sans",sans-serif' font-weight="bold" font-size="11.5" fill="#fff" stroke="#fff" stroke-width="0.3">E</text></svg>
<div class="tl" style="left:96px;top:624px">e</div>
<div class="vd" style="left:8px;top:16px;height:4px"></div>
<div class="vd" style="left:8px;top:30px;height:610px"></div>
<div class="vd" style="left:27px;top:32px;height:4px"></div>
<div class="vd" style="left:27px;top:46px;height:6px"></div>
<div class="vd" style="left:27px;top:62px;height:578px"></div>
<div class="vd" style="left:46px;top:64px;height:4px"></div>
<div class="vd" style="left:46px;top:78px;height:6px"></div>
<div class="vd" style="left:46px;top:94px;height:6px"></div>
<div class="vd" style="left:46px;top:110px;height:6px"></div>
<div class="vd" style="left:46px;top:126px;height:6px"></div>
<div class="vd" style="left:46px;top:142px;height:6px"></div>
<div class="vd" style="left:46px;top:158px;height:482px"></div>
<div class="vd" style="left:65px;top:160px;height:4px"></div>
<div class="vd" style="left:65px;top:174px;height:358px"></div>
<div class="vd" style="left:65px;top:542px;height:6px"></div>
<div class="vd" style="left:65px;top:558px;height:6px"></div>
<div class="vd" style="left:65px;top:574px;height:6px"></div>
<div class="vd" style="left:65px;top:590px;height:6px"></div>
<div class="vd" style="left:65px;top:606px;height:6px"></div>
<div class="vd" style="left:65px;top:622px;height:6px"></div>
<div class="vd" style="left:65px;top:638px;height:2px"></div>
<div class="vd" style="left:84px;top:176px;height:4px"></div>
<div class="vd" style="left:84px;top:190px;height:294px"></div>
<div class="vd" style="left:84px;top:494px;height:6px"></div>
<div class="vd" style="left:84px;top:510px;height:6px"></div>
<div class="vd" style="left:103px;top:192px;height:281px"></div>
</div>
<!-- scrollbars -->
<div class="sb" style="left:316px;top:90px;width:20px;height:655px"></div>
<div class="sb" style="left:11px;top:725px;width:325px;height:20px"></div>
<div class="th" style="left:316px;top:111px;width:19px;height:295px"></div>
<div class="th" style="left:32px;top:725px;width:227px;height:19px"></div>
<svg class="ab" style="left:319.5px;top:96px" width="12" height="9" viewBox="0 0 12 9"><path d="M1.4 7.2 L6 2.6 L10.6 7.2" fill="none" stroke="#5a5a5a" stroke-width="2.2"/></svg>
<svg class="ab" style="left:319.5px;top:709px" width="12" height="9" viewBox="0 0 12 9"><path d="M1.4 1.8 L6 6.4 L10.6 1.8" fill="none" stroke="#5a5a5a" stroke-width="2.2"/></svg>
<svg class="ab" style="left:16px;top:728.5px" width="9" height="12" viewBox="0 0 9 12"><path d="M7.2 1.4 L2.6 6 L7.2 10.6" fill="none" stroke="#5a5a5a" stroke-width="2.2"/></svg>
<svg class="ab" style="left:300px;top:728.5px" width="9" height="12" viewBox="0 0 9 12"><path d="M1.8 1.4 L6.4 6 L1.8 10.6" fill="none" stroke="#5a5a5a" stroke-width="2.2"/></svg>

<!-- right pane -->
<div id="rp"></div>
<div class="ab" style="left:342px;top:89px;width:992px;height:3px;background:#f0f0f0"></div>
<div id="tc"></div>

<div class="ab" style="left:1300px;top:118px;width:34px;height:1px;background:#b4b4b4"></div>
<div class="tab" style="left:342px;top:92px;width:80px;height:27px;border-left:none"></div>
<div class="ab" style="left:342px;top:100px;width:2px;height:16px;overflow:hidden"><div class="tt" style="left:-6px;top:0">R</div></div><div class="tt" style="left:344px;top:100px">T.RSA</div>
<svg class="ab" style="left:399px;top:101.5px" width="13" height="13" viewBox="0 0 13 13"><path d="M2.2 2.2 L10.8 10.8 M10.8 2.2 L2.2 10.8" stroke="#df5f66" stroke-width="3.2" stroke-linecap="round"/><path d="M2.4 2.4 L10.6 10.6 M10.6 2.4 L2.4 10.6" stroke="#ee9397" stroke-width="1.6" stroke-linecap="round"/></svg>
<div class="tab" style="left:422px;top:92px;width:154px;height:27px"></div>
<svg class="ab" style="left:433px;top:101px" width="12" height="14" viewBox="0 0 12 14"><path d="M0.5 0.5 H7.5 L10.5 3.5 V13.5 H0.5 Z" fill="#fff" stroke="#a88734" stroke-width="1"/><path d="M7.5 0.5 V3.5 H10.5" fill="#f4e7b8" stroke="#b79a4e" stroke-width="0.8"/><path d="M2.5 3.5 H6 M2.5 5.5 H8.5 M2.5 7.5 H8.5 M2.5 9.5 H8.5 M2.5 11.5 H7" stroke="#3f5fa5" stroke-width="1"/></svg>
<div class="tt" style="left:449px;top:100px">MANIFEST.MF</div>
<svg class="ab" style="left:553px;top:101.5px" width="13" height="13" viewBox="0 0 13 13"><path d="M2.2 2.2 L10.8 10.8 M10.8 2.2 L2.2 10.8" stroke="#df5f66" stroke-width="3.2" stroke-linecap="round"/><path d="M2.4 2.4 L10.6 10.6 M10.6 2.4 L2.4 10.6" stroke="#ee9397" stroke-width="1.6" stroke-linecap="round"/></svg>
<div class="tab" style="left:576px;top:92px;width:170px;height:27px"></div>
<svg class="ab" style="left:587px;top:101px" width="12" height="14" viewBox="0 0 12 14"><path d="M0.5 0.5 H7.5 L10.5 3.5 V13.5 H0.5 Z" fill="#fff" stroke="#a88734" stroke-width="1"/><path d="M7.5 0.5 V3.5 H10.5" fill="#f4e7b8" stroke="#b79a4e" stroke-width="0.8"/><path d="M2.5 3.5 H6 M2.5 5.5 H8.5 M2.5 7.5 H8.5 M2.5 9.5 H8.5 M2.5 11.5 H7" stroke="#3f5fa5" stroke-width="1"/></svg>
<div class="tt" style="left:603px;top:100px">resources.pak</div>
<svg class="ab" style="left:723px;top:101.5px" width="13" height="13" viewBox="0 0 13 13"><path d="M2.2 2.2 L10.8 10.8 M10.8 2.2 L2.2 10.8" stroke="#df5f66" stroke-width="3.2" stroke-linecap="round"/><path d="M2.4 2.4 L10.6 10.6 M10.6 2.4 L2.4 10.6" stroke="#ee9397" stroke-width="1.6" stroke-linecap="round"/></svg>
<div class="tab" style="left:746px;top:92px;width:321px;height:27px"></div>
<svg class="ab" style="left:755px;top:100px" width="14" height="14" viewBox="0 0 14 14"><circle cx="6.5" cy="6.5" r="6.3" fill="#2f8a45"/><text x="6.5" y="10" text-anchor="middle" font-family='"Liberation Sans",sans-serif' font-weight="bold" font-size="10" fill="#fff">C</text></svg>
<div class="tt" style="left:773px;top:100px">io.vov.utils.AndroidContextUtils</div>
<svg class="ab" style="left:1045px;top:101.5px" width="13" height="13" viewBox="0 0 13 13"><path d="M2.2 2.2 L10.8 10.8 M10.8 2.2 L2.2 10.8" stroke="#df5f66" stroke-width="3.2" stroke-linecap="round"/><path d="M2.4 2.4 L10.6 10.6 M10.6 2.4 L2.4 10.6" stroke="#ee9397" stroke-width="1.6" stroke-linecap="round"/></svg>
<div class="tabsel" style="left:1066px;top:90px;width:232px;height:30px"></div>
<svg class="ab" style="left:1296px;top:90px" width="8" height="30" viewBox="0 0 8 30"><path d="M0 0.5 H4.5 L5.4 3 L3.4 7 L5.2 11 L3.6 15 L5.6 19 L3.8 23 L5.4 27 L4.6 30 H0 Z" fill="#fff"/><path d="M0 0.5 H4.5 L5.4 3 L3.4 7 L5.2 11 L3.6 15 L5.6 19 L3.8 23 L5.4 27 L4.6 30" fill="none" stroke="#a3a3a3" stroke-width="1"/></svg>
<svg class="ab" style="left:1078px;top:98px" width="14" height="14" viewBox="0 0 14 14"><circle cx="6.5" cy="6.5" r="6.3" fill="#2f8a45"/><text x="6.5" y="10" text-anchor="middle" font-family='"Liberation Sans",sans-serif' font-weight="bold" font-size="10" fill="#fff">C</text></svg>
<div class="tt" style="left:1097px;top:98px">com.ks.gopush.cli.a.a</div>
<svg class="ab" style="left:1280px;top:99.5px" width="13" height="13" viewBox="0 0 13 13"><path d="M2.2 2.2 L10.8 10.8 M10.8 2.2 L2.2 10.8" stroke="#df5f66" stroke-width="3.2" stroke-linecap="round"/><path d="M2.4 2.4 L10.6 10.6 M10.6 2.4 L2.4 10.6" stroke="#ee9397" stroke-width="1.6" stroke-linecap="round"/></svg>
<!-- tab scroll buttons -->
<div class="ab" style="left:1302px;top:104px;width:15px;height:16px;background:#ececec;border-right:1px solid #7a7a7a;border-bottom:1px solid #7a7a7a;border-top:1px solid #fafafa;border-left:1px solid #fafafa"></div>
<div class="ab" style="left:1318px;top:104px;width:16px;height:16px;background:#ececec;border-right:1px solid #7a7a7a;border-bottom:1px solid #7a7a7a;border-top:1px solid #fafafa;border-left:1px solid #fafafa"></div>
<svg class="ab" style="left:1307px;top:108px" width="6" height="8" viewBox="0 0 6 8"><path d="M5 0.5 V7.5 L0.8 4 Z" fill="#5a5a5a"/></svg>
<svg class="ab" style="left:1323px;top:108px" width="6" height="8" viewBox="0 0 6 8"><path d="M1 0.5 V7.5 L5.2 4 Z" fill="#9a9a9a"/></svg>
<div class="ab" style="left:343px;top:121px;width:1px;height:624px;background:#dcdcdc"></div>
<div class="ab" style="left:343px;top:744px;width:990px;height:1px;background:#ababab"></div>
<div class="ab" style="left:1332px;top:121px;width:1px;height:624px;background:#ababab"></div>
<div id="ed"><div id="gut"></div><div id="code">
<div class="ln"><b class="k">package</b> <b class="i">com.ks.gopush.cli.a;</b></div>
<div class="ln"></div>
<div class="ln"><span class="c">/* compiled from: Constant */</span></div>
<div class="ln"><b class="k">public class</b> <b class="i">a</b> <b class="r">{</b></div>
<div class="ln"><span class="ind"></span><b class="k">public static final</b> <span class="t">int</span> <b class="i">a</b> <span class="o">=</span> <span class="n">0</span><b class="i">;</b></div>
<div class="ln"><span class="ind"></span><b class="k">public static final</b> <b class="i">String</b> <b class="i">b</b> <span class="o">=</span> <b class="s">"ret"</b><b class="i">;</b></div>
<div class="ln hl"><span class="ind"></span><b class="k">public static final</b> <b class="i">String</b> <b class="i">c</b> <span class="o">=</span> <b class="s">"msg"</b><b class="i">;</b></div>
<div class="ln"><span class="ind"></span><b class="k">public static final</b> <b class="i">String</b> <b class="i">d</b> <span class="o">=</span> <b class="s">"data"</b><b class="i">;</b></div>
<div class="ln"><span class="ind"></span><b class="k">public static final</b> <b class="i">String</b> <b class="i">e</b> <span class="o">=</span> <b class="s">"server"</b><b class="i">;</b></div>
<div class="ln"><span class="ind"></span><b class="k">public static final</b> <b class="i">String</b> <b class="i">f</b> <span class="o">=</span> <b class="s">"msgs"</b><b class="i">;</b></div>
<div class="ln"><span class="ind"></span><b class="k">public static final</b> <b class="i">String</b> <b class="i">g</b> <span class="o">=</span> <b class="s">"pmsgs"</b><b class="i">;</b></div>
<div class="ln"><span class="ind"></span><b class="k">public static final</b> <b class="i">String</b> <b class="i">h</b> <span class="o">=</span> <b class="s">"msg"</b><b class="i">;</b></div>
<div class="ln"><span class="ind"></span><b class="k">public static final</b> <b class="i">String</b> <b class="i">i</b> <span class="o">=</span> <b class="s">"mid"</b><b class="i">;</b></div>
<div class="ln"><span class="ind"></span><b class="k">public static final</b> <b class="i">String</b> <b class="i">j</b> <span class="o">=</span> <b class="s">"gid"</b><b class="i">;</b></div>
<div class="ln"><span class="ind"></span><b class="k">public static final</b> <b class="i">String</b> <b class="i">k</b> <span class="o">=</span> <b class="s">"address"</b><b class="i">;</b></div>
<div class="ln"><span class="ind"></span><b class="k">public static final</b> <b class="i">String</b> <b class="i">l</b> <span class="o">=</span> <b class="s">"port"</b><b class="i">;</b></div>
<div class="ln"><span class="ind"></span><b class="k">public static final</b> <b class="i">String</b> <b class="i">m</b> <span class="o">=</span> <b class="s">"socket_connection_action"</b><b class="i">;</b></div>
<div class="ln"><span class="ind"></span><b class="k">public static final</b> <span class="t">int</span> <b class="i">n</b> <span class="o">=</span> <span class="n">2</span><b class="i">;</b></div>
<div class="ln"><span class="ind"></span><b class="k">public static final</b> <span class="t">int</span> <b class="i">o</b> <span class="o">=</span> <span class="n">1</span><b class="i">;</b></div>
<div class="ln"><span class="ind"></span><b class="k">public static final</b> <span class="t">int</span> <b class="i">p</b> <span class="o">=</span> <span class="n">0</span><b class="i">;</b></div>
<div class="ln"><span class="ind"></span><b class="k">public static final</b> <span class="t">int</span> <b class="i">q</b> <span class="o">=</span> <span class="n">30000</span><b class="i">;</b></div>
<div class="ln"><span class="ind"></span><b class="k">public static final</b> <span class="t">int</span> <b class="i">r</b> <span class="o">=</span> <span class="n">60000</span><b class="i">;</b></div>
<div class="ln"><b class="r">}</b></div>
</div></div>
</body></html>
